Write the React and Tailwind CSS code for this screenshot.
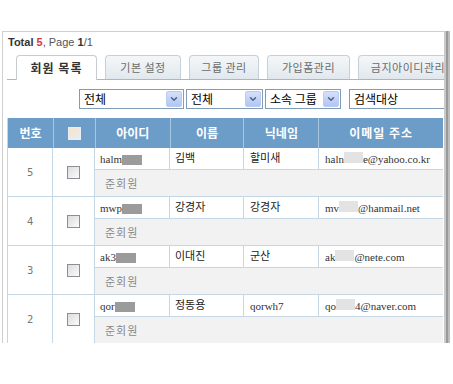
import { ChevronDown } from 'lucide-react';

const rows = [
  { no: 5, id: 'halm', name: '김백', nick: '할미새', nickSerif: false, mailA: 'haln', mailB: 'e@yahoo.co.kr' },
  { no: 4, id: 'mwp', name: '강경자', nick: '강경자', nickSerif: false, mailA: 'mv', mailB: '@hanmail.net' },
  { no: 3, id: 'ak3', name: '이대진', nick: '군산', nickSerif: false, mailA: 'ak', mailB: '@nete.com' },
  { no: 2, id: 'qor', name: '정동용', nick: 'qorwh7', nickSerif: true, mailA: 'qo', mailB: '4@naver.com' },
];

const kr = { fontFamily: '"Noto Sans CJK KR", "Noto Sans", sans-serif' };
const serif = { fontFamily: '"Liberation Serif", serif' };

function Tab({ label, active, w }) {
  return (
    <div
      className={`h-[24px] flex items-center justify-center rounded-t-[4px] border border-b-0 ${w} ${
        active
          ? 'bg-white border-[#c4ccd2] text-[#333] font-bold text-[12px] tracking-[1px] -mb-px h-[25px]'
          : 'bg-gradient-to-b from-[#f4f7f9] to-[#e1e8ed] border-[#c5d0d8] text-[#6b6b6b] text-[11px] tracking-[0.5px]'
      }`}
      style={kr}
    >
      {label}
    </div>
  );
}

function Select({ label, w }) {
  return (
    <div className={`h-[20px] flex items-center border border-[#7f9db9] bg-white ${w}`}>
      <span className="flex-1 pl-[4px] text-[12px] text-black leading-none" style={kr}>{label}</span>
      <span className="w-[16px] h-[16px] mr-px flex items-center justify-center rounded-[2px] bg-gradient-to-b from-[#d4e0fb] to-[#b2c6f3] border border-[#bccbef]">
        <ChevronDown size={10} strokeWidth={3.5} color="#4d6185" />
      </span>
    </div>
  );
}

function Check({ head }) {
  return (
    <span
      className={`block w-[13px] h-[13px] border ${
        head ? 'border-[#e8eef4] bg-gradient-to-br from-[#f6e3c8] to-[#e8edf2]' : 'border-[#8a8f96] bg-gradient-to-br from-[#dcdcdc] to-[#fbfbfb]'
      }`}
    />
  );
}

export default function App() {
  return (
    <div className="w-[453px] h-[384px] bg-white overflow-hidden">
      <div className="ml-[2px] mt-[31px] w-[448px] h-[312px] flex">
        <div className="flex-1 min-w-0 border-l border-t border-[#cfcfcf] bg-white overflow-hidden pl-[4px]">
          <div className="h-[12px] mt-[4px] pl-[1px] text-[11px] leading-[12px] text-[#555] whitespace-nowrap" style={{ fontFamily: '"Liberation Sans", Arial, sans-serif' }}>
            <b className="text-[#333]">Total</b> <b className="text-[#d9383a]">5</b>, Page <b className="text-[#333]">1</b>/1
          </div>

          <div className="mt-[7px] border-b border-[#a9b8c4] pl-[9px] flex items-end gap-[8px] whitespace-nowrap">
            <Tab label="회원 목록" active w="w-[81px] shrink-0" />
            <Tab label="기본 설정" w="w-[76px] shrink-0" />
            <Tab label="그룹 관리" w="w-[70px] shrink-0" />
            <Tab label="가입폼관리" w="w-[83px] shrink-0" />
            <Tab label="금지아이디관리" w="w-[100px] shrink-0" />
          </div>

          <div className="mt-[9px] pl-[72px] flex items-center gap-[2px] whitespace-nowrap">
            <Select label="전체" w="w-[105px] shrink-0" />
            <Select label="전체" w="w-[77px] shrink-0" />
            <Select label="소속 그룹" w="w-[76px] shrink-0" />
            <div className="ml-[6px] w-[110px] shrink-0 h-[20px] flex items-center border border-[#7f9db9] bg-white pl-[4px] text-[12px] text-black" style={kr}>
              검색대상
            </div>
          </div>

          <div className="mt-[9px] w-[436px] border-l border-[#c5d6e4]">
            <div className="h-[30px] flex bg-[#6c9dc8] text-white text-[12px] font-bold" style={kr}>
              <div className="w-[46px] flex items-center justify-center border-r border-[#a8c6de]">번호</div>
              <div className="w-[42px] flex items-center justify-center border-r border-[#a8c6de]"><Check head /></div>
              <div className="w-[75px] flex items-center justify-center border-r border-[#a8c6de]">아이디</div>
              <div className="w-[74px] flex items-center justify-center border-r border-[#a8c6de]">이름</div>
              <div className="w-[75px] flex items-center justify-center border-r border-[#a8c6de]">닉네임</div>
              <div className="w-[124px] flex items-center justify-center tracking-[1px]">이메일 주소</div>
            </div>

            {rows.map((r) => (
              <div key={r.no} className="h-[49px] flex border-b border-[#c5d6e4]">
                <div className="w-[46px] flex items-center justify-center border-r border-[#c5d6e4] text-[10px] text-[#777]" style={{ fontFamily: '"DejaVu Sans", sans-serif' }}>
                  {r.no}
                </div>
                <div className="w-[42px] flex items-center justify-center border-r border-[#c5d6e4]">
                  <Check />
                </div>
                <div className="flex-1 flex flex-col">
                  <div className="h-[22px] flex border-b border-[#c5d6e4] bg-white">
                    <div className="w-[75px] border-r border-[#c5d6e4] pl-[5px] pt-[5px] flex items-start text-[11px] leading-[12px] text-[#333]" style={serif}>
                      {r.id}
                      <span className="inline-block w-[20px] h-[10px] mt-[2px] bg-[#9b9b9b]" />
                    </div>
                    <div className="w-[74px] border-r border-[#c5d6e4] pl-[5px] pt-[2px] text-[11px] leading-[14px] text-[#222]" style={kr}>
                      {r.name}
                    </div>
                    <div
                      className={`w-[75px] border-r border-[#c5d6e4] pl-[6px] ${r.nickSerif ? 'pt-[5px] text-[11px] leading-[12px] text-[#333]' : 'pt-[2px] text-[11px] leading-[14px] text-[#222]'}`}
                      style={r.nickSerif ? serif : kr}
                    >
                      {r.nick}
                    </div>
                    <div className="w-[124px] pl-[6px] pt-[5px] flex items-start text-[11px] leading-[12px] text-[#333] whitespace-nowrap" style={serif}>
                      {r.mailA}
                      <span className="inline-block w-[19px] h-[11px] -mt-px bg-[#e3e3e3]" />
                      {r.mailB}
                    </div>
                  </div>
                  <div className="flex-1 bg-[#f2f2f2] pl-[10px] flex items-center text-[11px] text-[#888] tracking-[1px]" style={kr}>
                    준회원
                  </div>
                </div>
              </div>
            ))}
          </div>
        </div>
        <div className="w-[6px] flex">
          <div className="w-[2px] bg-[#c9c9c9]" />
          <div className="w-[2px] bg-[#9a9a9a]" />
          <div className="w-[2px] bg-[#bdbdbd]" />
        </div>
      </div>
    </div>
  );
}
